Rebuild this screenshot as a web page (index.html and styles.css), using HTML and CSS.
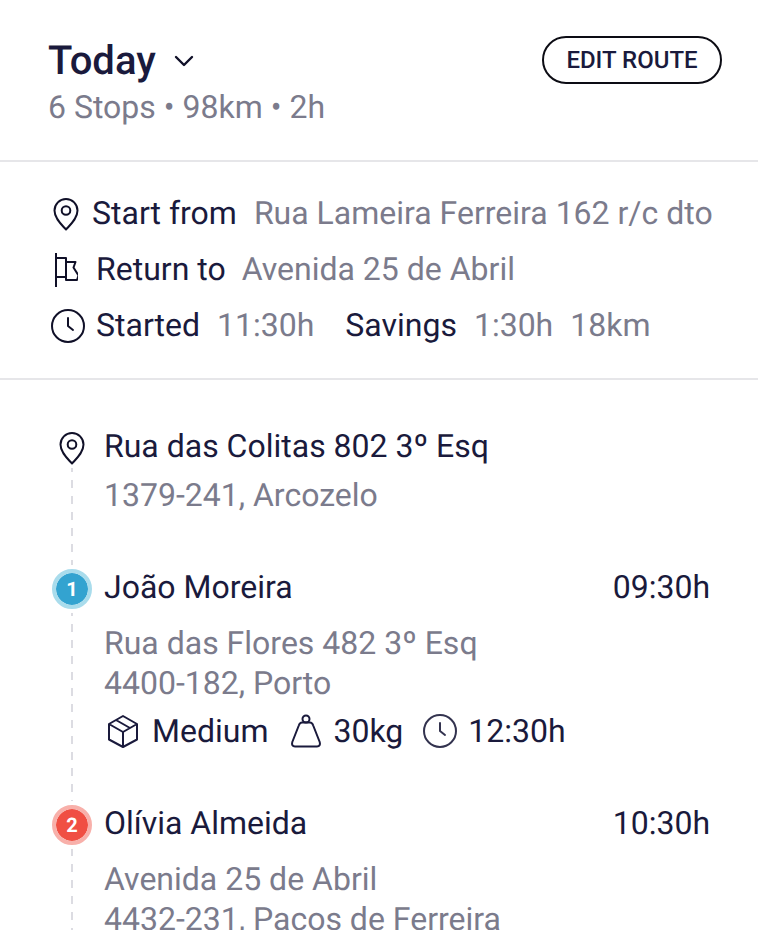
FILE: index.html
```html
<!DOCTYPE html>
<html lang="pt">
<head>
<meta charset="utf-8">
<title>Today</title>
<link rel="stylesheet" href="styles.css">
</head>
<body>
<svg class="defs" width="0" height="0" aria-hidden="true">
  <symbol id="pin" viewBox="0 0 28 34"><path d="M14 32.5C9.5 27.5 2.5 21.5 2.5 13.5a11.5 11.5 0 0 1 23 0C25.500 21.500 18.500 27.500 14 32.500Z" fill="none" stroke="currentColor" stroke-width="2" stroke-linejoin="round"/><circle cx="14" cy="13.500" r="4.300" fill="none" stroke="currentColor" stroke-width="2"/></symbol>
  <symbol id="clock" viewBox="0 0 34 34"><circle cx="17" cy="17" r="16" fill="none" stroke="currentColor" stroke-width="2"/><path d="M17 9v8l5 4" fill="none" stroke="currentColor" stroke-width="2" stroke-linecap="round" stroke-linejoin="round"/></symbol>
</svg>
<main class="page">
  <header class="head">
    <div class="head-top">
      <h1 class="title">Today
        <svg class="chev" viewBox="0 0 20 12" width="20" height="12" aria-hidden="true"><path d="M2 2l8 8 8-8" fill="none" stroke="currentColor" stroke-width="2.400" stroke-linecap="round" stroke-linejoin="round"/></svg>
      </h1>
      <button class="edit" type="button">EDIT ROUTE</button>
    </div>
    <p class="muted head-sub">6 Stops • 98km • 2h</p>
  </header>

  <section class="summary">
    <div class="row row-start">
      <svg class="ic-pin" aria-hidden="true"><use href="#pin"/></svg>
      <span class="label">Start from</span><span class="muted val">Rua Lameira Ferreira 162 r/c dto</span>
    </div>
    <div class="row row-return">
      <svg class="ic-flag" viewBox="0 0 26 34" aria-hidden="true"><path d="M4 0v34M4 5h10v19H4M14 9h9.500l-2 5.500 5 8-1.500 4.500H14V24" fill="none" stroke="currentColor" stroke-width="2" stroke-linejoin="round"/></svg>
      <span class="label">Return to</span><span class="muted val">Avenida 25 de Abril</span>
    </div>
    <div class="row row-started">
      <svg class="ic-clock" aria-hidden="true"><use href="#clock"/></svg>
      <span class="label">Started</span><span class="muted val">11:30h</span>
      <span class="label savings">Savings</span><span class="muted val">1:30h</span><span class="muted val km">18km</span>
    </div>
  </section>

  <section class="stops">
    <div class="rail"></div>
    <article class="stop stop-origin">
      <div class="stop-head">
        <span class="marker"><svg class="ic-pin" aria-hidden="true"><use href="#pin"/></svg></span>
        <span class="label">Rua das Colitas 802 3º Esq</span>
      </div>
      <p class="muted line line-origin">1379-241, Arcozelo</p>
    </article>

    <article class="stop stop-one">
      <div class="stop-head">
        <span class="marker"><span class="badge badge-blue">1</span></span>
        <span class="label grow">João Moreira</span>
        <span class="label">09:30h</span>
      </div>
      <p class="muted line line-first">Rua das Flores 482 3º Esq</p>
      <p class="muted line">4400-182, Porto</p>
      <div class="meta">
        <svg class="ic-box" viewBox="0 0 34 34" aria-hidden="true"><path d="M17 2l14 8v15.500L17 33 3 25.500V10ZM3 10l14 8 14-8M17 18v15M10 6l14 8" fill="none" stroke="currentColor" stroke-width="2" stroke-linejoin="round"/></svg>
        <span class="label">Medium</span>
        <svg class="ic-weight" viewBox="0 0 32 34" aria-hidden="true"><circle cx="16" cy="5" r="3.500" fill="none" stroke="currentColor" stroke-width="2"/><path d="M12 8.500h8c2 0 2.500 1 3.200 3L29.700 28c.8 2.500-.2 4.500-2.700 4.500H5c-2.500 0-3.500-2-2.700-4.500L8.800 11.500c.7-2 1.200-3 3.200-3Z" fill="none" stroke="currentColor" stroke-width="2" stroke-linejoin="round"/></svg>
        <span class="label">30kg</span>
        <svg class="ic-clock" aria-hidden="true"><use href="#clock"/></svg>
        <span class="label">12:30h</span>
      </div>
    </article>

    <article class="stop stop-two">
      <div class="stop-head">
        <span class="marker"><span class="badge badge-red">2</span></span>
        <span class="label grow">Olívia Almeida</span>
        <span class="label">10:30h</span>
      </div>
      <p class="muted line line-first">Avenida 25 de Abril</p>
      <p class="muted line">4432-231, Paços de Ferreira</p>
    </article>
  </section>
</main>
</body>
</html>
```
FILE: styles.css
```css
* { box-sizing: border-box; }
html, body { margin: 0; height: 100%; overflow: hidden; background: #fff; }
body { font-family: Roboto, "Liberation Sans", sans-serif; font-size: 32px; color: #1a1a3c; text-rendering: geometricPrecision; }
p, h1 { margin: 0; }
.defs { position: absolute; }
.page { height: 930px; overflow: hidden; }
.muted { color: #7b7b8c; }
.label { color: #1a1a3c; }

.head { height: 162px; padding: 36px 36px 0 48px; border-bottom: 2px solid #e6e6e9; }
.head-top { display: flex; justify-content: space-between; align-items: flex-start; height: 48px; }
.title { display: flex; align-items: center; gap: 18px; font-size: 40px; font-weight: 500; line-height: 50px; }
.chev { color: #101028; margin-top: -1px; }
.edit { width: 180px; height: 48px; padding: 0; border: 2px solid #0c0c14; border-radius: 24px; background: #fff; color: #1a1a3c; font: 500 24px/1 Roboto, "Liberation Sans", sans-serif; text-rendering: geometricPrecision; }
.head-sub { line-height: 48px; margin-top: -1px; }

.summary { height: 218px; padding: 24px 0 0 50px; border-bottom: 2px solid #e6e6e9; }
.row { display: flex; align-items: center; height: 56px; line-height: 52px; }
.val { margin-left: 17px; }
.row-return .val { margin-left: 16px; }
.savings { margin-left: 31px; }
.ic-pin { width: 28px; height: 34px; color: #101028; flex: none; }
.ic-flag { width: 26px; height: 34px; margin-left: 2px; margin-right: 18px; color: #101028; flex: none; }
.ic-clock { width: 34px; height: 34px; margin-right: 11px; color: #101028; flex: none; }
.row-started .ic-clock { margin-left: 1px; }
.row-start .ic-pin { margin: 0 12px 0 2px; }
.row > span { position: relative; top: -1px; }

.stops { position: relative; padding: 44px 48px 0 52px; }
.rail { position: absolute; left: 71px; top: 88px; bottom: 0; width: 2px; background: repeating-linear-gradient(to bottom, #dcdce2 0 4px, transparent 4px 12px, #dcdce2 12px 16px); }
.stop { position: relative; }
.stop-head { display: flex; align-items: center; height: 48px; }
.stop-head > .label { position: relative; top: -2px; }
.grow { flex: 1; }
.marker { display: flex; justify-content: center; align-items: center; width: 40px; height: 40px; margin-right: 12px; }
.badge { display: flex; align-items: center; justify-content: center; width: 40px; height: 40px; border-radius: 50%; border: 4px solid; background-clip: padding-box; color: #fff; font-size: 20px; font-weight: 700; box-shadow: 0 0 0 4px #fff; }
.badge-blue { background-color: #33a3d0; border-color: #a9dcec; }
.badge-red { background-color: #f04f43; border-color: #f8b0aa; }
.line { margin-left: 52px; line-height: 40px; }
.line-origin { margin-top: 1px; line-height: 44px; }
.line-first { margin-top: 10px; }
.stop-one { margin-top: 48px; }
.stop-two { margin-top: 46px; }
.meta { display: flex; align-items: center; height: 48px; margin-top: 4px; margin-left: 54px; }
.ic-box { width: 34px; height: 34px; margin-right: 12px; color: #1a1a3c; flex: none; }
.ic-weight { width: 32px; height: 34px; margin-left: 22px; margin-right: 11px; color: #1a1a3c; flex: none; }
.meta .ic-clock { margin-left: 20px; color: #33334f; }
```
